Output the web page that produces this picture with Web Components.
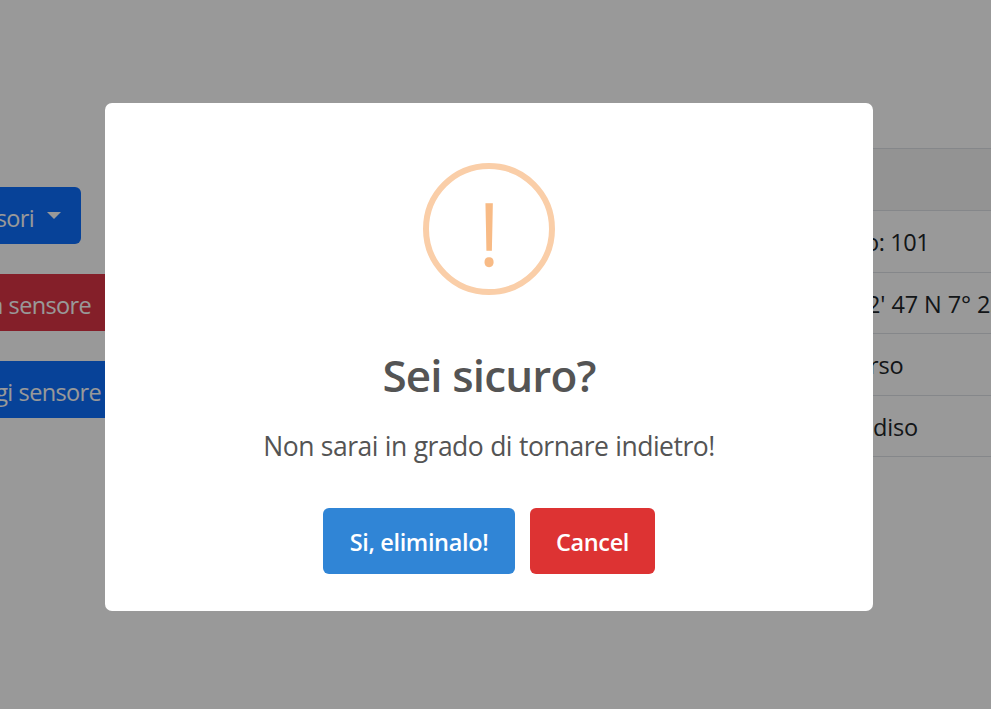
<!DOCTYPE html>
<html lang="it">
<head>
<meta charset="utf-8">
<title>Sensori</title>
<style>
html,body{margin:0;height:100%;overflow:hidden;background:#fff}
body{font-family:"Open Sans","Noto Sans",sans-serif;font-size:23.5px;color:#212529}
</style>
</head>
<body>
<sensor-page></sensor-page>
<script>
const define = (name, html) => customElements.define(name, class extends HTMLElement {
  constructor() {
    super();
    this.attachShadow({ mode: 'open' }).innerHTML = html;
  }
});

define('action-button', `
<style>
:host{display:flex;align-items:center;justify-content:flex-end;box-sizing:border-box;height:57px;padding:4px 20px 0 0;background:#0d6efd;color:#fff;white-space:nowrap;overflow:hidden;letter-spacing:-.65px;word-spacing:.5px;border-radius:0 6px 6px 0}
:host([kind=danger]){background:#dc3545}
i{display:none;margin:-5px 0 0 13px;border:7px solid transparent;border-top-color:#fff;border-bottom:0}
:host([caret]) i{display:block}
</style><slot></slot><i></i>`);

define('data-row', `
<style>
:host{display:flex;align-items:center;box-sizing:border-box;height:61.6px;padding:2px 0 0 var(--inset,0);border-bottom:1px solid #dee2e6;white-space:nowrap;overflow:hidden;letter-spacing:var(--ls,-.2px)}
:host([head]){background:#f5f5f5;border-top:1px solid #dee2e6;height:62.98px}
</style><slot></slot>`);

define('warning-icon', `
<style>
:host{display:flex;align-items:center;justify-content:center;box-sizing:border-box;width:132px;height:132px;border:6px solid #facea8;border-radius:50%;color:#f8bb86;font-size:84px;font-weight:300;line-height:120px;-webkit-text-stroke:2.4px #f8bb86}
span{display:block;padding-top:7px}
</style><span>!</span>`);

define('dialog-button', `
<style>
:host{display:flex;align-items:center;justify-content:center;box-sizing:border-box;width:var(--w);height:66px;padding-top:1px;border-radius:6px;background:#3085d6;color:#fff;font-weight:600;white-space:nowrap;letter-spacing:-.35px}
:host([kind=danger]){background:#dd3333}
</style><slot></slot>`);

define('confirm-dialog', `
<style>
:host{display:flex;flex-direction:column;align-items:center;box-sizing:border-box;width:768px;height:508px;padding-top:60px;border-radius:7px;background:#fff;color:#545454}
h2{margin:49px 0 0;font-size:44px;font-weight:600;line-height:62px;letter-spacing:-.85px}
p{margin:20px 0 0;font-size:26.5px;line-height:40px;letter-spacing:-.5px;word-spacing:.5px;white-space:nowrap}
footer{display:flex;gap:15px;margin-top:42px}
</style>
<warning-icon></warning-icon>
<h2><slot name="title"></slot></h2>
<p><slot></slot></p>
<footer><slot name="actions"></slot></footer>`);

define('sensor-page', `
<style>
:host{display:block;position:relative;width:991px;height:709px;overflow:hidden}
main{display:flex;justify-content:space-between;height:100%}
nav{display:flex;flex-direction:column;align-items:flex-start;gap:30px;padding-top:187px}
section{width:151px;padding-top:148px}
.backdrop{position:absolute;inset:0;display:flex;align-items:flex-start;padding:103px 0 0 105px;background:rgba(0,0,0,.4)}
</style>
<main>
 <nav>
  <action-button caret style="width:81px">sori</action-button>
  <action-button kind="danger" style="width:111px">a sensore</action-button>
  <action-button style="width:121px">gi sensore</action-button>
 </nav>
 <section>
  <data-row head></data-row>
  <data-row style="--inset:25px;--ls:-.4px">o: 101</data-row>
  <data-row style="--inset:27px;--ls:-.1px">2' 47 N 7° 23</data-row>
  <data-row style="--inset:29px">rso</data-row>
  <data-row style="--inset:33px">diso</data-row>
 </section>
</main>
<div class="backdrop">
 <confirm-dialog>
  <span slot="title">Sei sicuro?</span>
  Non sarai in grado di tornare indietro!
  <dialog-button slot="actions" style="--w:192px">Si, eliminalo!</dialog-button>
  <dialog-button slot="actions" kind="danger" style="--w:125px">Cancel</dialog-button>
 </confirm-dialog>
</div>`);
</script>
</body>
</html>
